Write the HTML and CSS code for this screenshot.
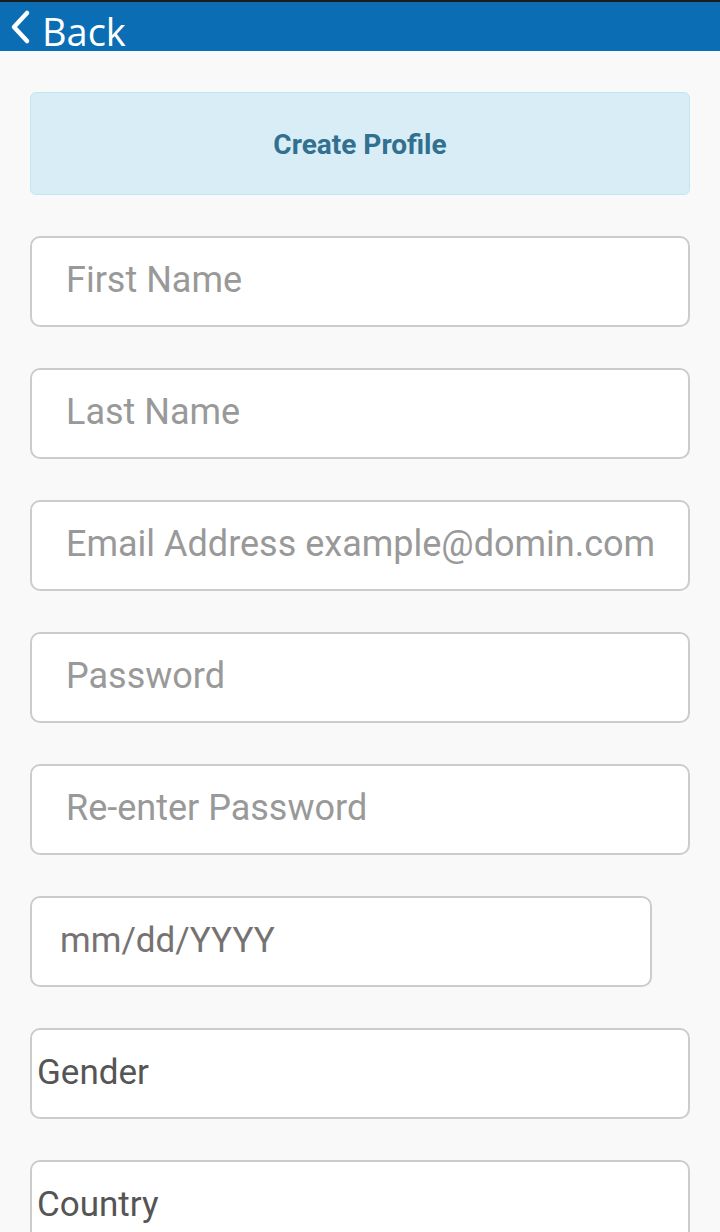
FILE: index.html
```html
<!DOCTYPE html>
<html lang="en">
<head>
    <meta charset="UTF-8">
    <meta name="viewport" content="width=device-width, initial-scale=1.0">
    <title>Create Profile</title>
    <link rel="stylesheet" href="styles.css">
</head>
<body>
    <div class="top-bar">
        <a class="back-link" href="#">
            <svg class="back-icon" width="24" height="36" viewBox="0 0 24 36">
                <path d="M19 4 L6 18 L19 32" fill="none" stroke="#fff" stroke-width="4.5" stroke-linecap="round" stroke-linejoin="round"/>
            </svg>
            <span>Back</span>
        </a>
    </div>

    <form class="profile-form">
        <div class="alert-info">Create Profile</div>

        <input type="text" class="field" placeholder="First Name">
        <input type="text" class="field" placeholder="Last Name">
        <input type="email" class="field" placeholder="Email Address example@domin.com">
        <input type="password" class="field" placeholder="Password">
        <input type="password" class="field" placeholder="Re-enter Password">
        <input type="text" class="field field-date" placeholder="mm/dd/YYYY">
        <div class="field field-select">Gender</div>
        <div class="field field-select">Country</div>
    </form>
</body>
</html>
```

FILE: styles.css
```css
/* Create profile form */
body {
    margin: 0;
    background-color: #f9f9f9;
    font-family: Roboto, "Noto Sans", sans-serif;
}

.top-bar {
    height: 49px;
    border-top: 2px solid #1c1c1c;
    background-color: #0b6db3;
    display: flex;
    align-items: center;
}

.back-link {
    display: flex;
    align-items: center;
    gap: 10px;
    padding-left: 8px;
    color: #fff;
    text-decoration: none;
    font-family: "Open Sans", sans-serif;
    font-size: 38px;
    line-height: 1;
}

.back-link span {
    margin-top: 8px;
}

.profile-form {
    display: flex;
    flex-direction: column;
    gap: 41px;
    padding: 41px 30px 0;
}

.alert-info {
    box-sizing: border-box;
    height: 103px;
    display: flex;
    align-items: center;
    justify-content: center;
    padding-top: 2px;
    background-color: #d9edf7;
    border: 1px solid #bce8f1;
    border-radius: 6px;
    color: #31708f;
    font-weight: bold;
    font-size: 28px;
}

.field {
    box-sizing: border-box;
    width: 100%;
    height: 91px;
    padding: 0 34px 3px;
    background-color: #fff;
    border: 2px solid #cccccc;
    border-radius: 10px;
    font-family: Roboto, sans-serif;
    font-size: 36px;
    color: #555;
    outline: none;
}

.field::placeholder {
    color: #999;
}

.field-date {
    width: 622px;
    padding-left: 28px;
    font-size: 35px;
}

.field-date::placeholder {
    color: #777272;
}

.field-select {
    display: flex;
    align-items: center;
    padding-left: 5px;
    font-size: 35px;
}
```
